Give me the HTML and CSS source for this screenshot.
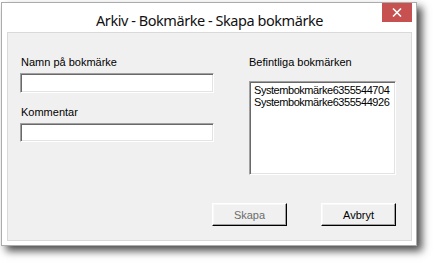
FILE: index.html
```html
<!DOCTYPE html>
<html lang="sv">
<head>
<meta charset="utf-8">
<title>Arkiv - Bokmärke - Skapa bokmärke</title>
<link rel="stylesheet" href="styles.css">
</head>
<body>
<div class="window">
  <div class="titlebar">
    <span class="spacer"></span>
    <span class="title">Arkiv - Bokmärke - Skapa bokmärke</span>
    <span class="controls">
      <span class="close" aria-label="Stäng">
        <svg width="10" height="9" viewBox="0 0 10 9"><path d="M1 0.5 L9 8.5 M9 0.5 L1 8.5" stroke="#fff" stroke-width="1.6" fill="none"/></svg>
      </span>
    </span>
  </div>
  <div class="client">
    <div class="fields">
      <div class="col-left">
        <label class="lbl">Namn på bokmärke</label>
        <div class="field field-a"></div>
        <label class="lbl lbl-2">Kommentar</label>
        <div class="field field-b"></div>
      </div>
      <div class="col-right">
        <label class="lbl">Befintliga bokmärken</label>
        <div class="listbox">
          <div class="item">Systembokmärke6355544704</div>
          <div class="item">Systembokmärke6355544926</div>
        </div>
      </div>
    </div>
    <div class="buttons">
      <div class="btn btn-disabled">Skapa</div>
      <div class="btn">Avbryt</div>
    </div>
  </div>
</div>
</body>
</html>
```

FILE: styles.css
```css
html, body {
  margin: 0;
  padding: 0;
  background: #ffffff;
}

body {
  width: 433px;
  height: 266px;
  overflow: hidden;
  font-family: "Liberation Sans", Arial, sans-serif;
}

.window {
  box-sizing: border-box;
  width: 416px;
  height: 244px;
  margin: 2px 0 0 1px;
  border: 1px solid #acacac;
  background: #ffffff;
  padding: 0 4px 4px 5px;
  display: flex;
  flex-direction: column;
  box-shadow: 5px 5px 8px rgba(0, 0, 0, 0.7);
}

.titlebar {
  height: 29px;
  display: grid;
  grid-template-columns: 1fr auto 1fr;
  align-items: start;
}

.title {
  font-family: "Segoe UI", "Noto Sans", "Open Sans", sans-serif;
  font-size: 14.5px;
  letter-spacing: -0.45px;
  line-height: 20px;
  color: #111;
  padding-top: 7px;
}

.controls {
  display: flex;
  justify-content: flex-end;
}

.close {
  width: 30px;
  height: 19px;
  background: #c75050;
  display: flex;
  align-items: center;
  justify-content: center;
}

.client {
  flex: 1;
  background: #f0f0f0;
  border: 1px solid #d9d9d9;
  padding: 23px 15px 0 12px;
  display: flex;
  flex-direction: column;
}

.fields {
  display: flex;
  gap: 34px;
}

.col-left {
  width: 194px;
  display: flex;
  flex-direction: column;
}

.col-right {
  width: 148px;
  display: flex;
  flex-direction: column;
}

.lbl {
  font-size: 11px;
  line-height: 13px;
  height: 13px;
  color: #000;
  padding-left: 1px;
}

.lbl-2 {
  margin-top: 13px;
}

.field {
  box-sizing: border-box;
  background: #fff;
  border: 1px solid;
  border-color: #a0a0a0 #ffffff #ffffff #a0a0a0;
  box-shadow: inset 1px 1px 0 #696969, inset -1px -1px 0 #e3e3e3;
  margin-top: 4px;
}

.field-a {
  height: 20px;
}

.field-b {
  height: 19px;
}

.listbox {
  box-sizing: border-box;
  margin: 12px 0 0 1px;
  width: 147px;
  height: 94px;
  background: #fff;
  border: 1px solid;
  border-color: #a0a0a0 #ffffff #ffffff #a0a0a0;
  box-shadow: inset 1px 1px 0 #696969, inset -1px -1px 0 #e3e3e3;
  padding: 2px 0 0 4px;
  overflow: hidden;
}

.item {
  font-size: 11px;
  line-height: 11px;
  height: 11px;
  letter-spacing: -0.45px;
  white-space: nowrap;
  color: #000;
  padding-top: 1px;
}

.buttons {
  display: flex;
  justify-content: flex-end;
  gap: 34px;
  margin-top: 28px;
}

.btn {
  box-sizing: border-box;
  width: 75px;
  height: 23px;
  border: 1px solid;
  border-color: #ffffff #000000 #000000 #ffffff;
  box-shadow: inset -1px -1px 0 #a0a0a0, inset 1px 1px 0 #f8f8f8;
  background: #f0f0f0;
  font-size: 11px;
  color: #000;
  display: flex;
  align-items: center;
  justify-content: center;
}

.btn-disabled {
  color: #6d6d6d;
}
```
